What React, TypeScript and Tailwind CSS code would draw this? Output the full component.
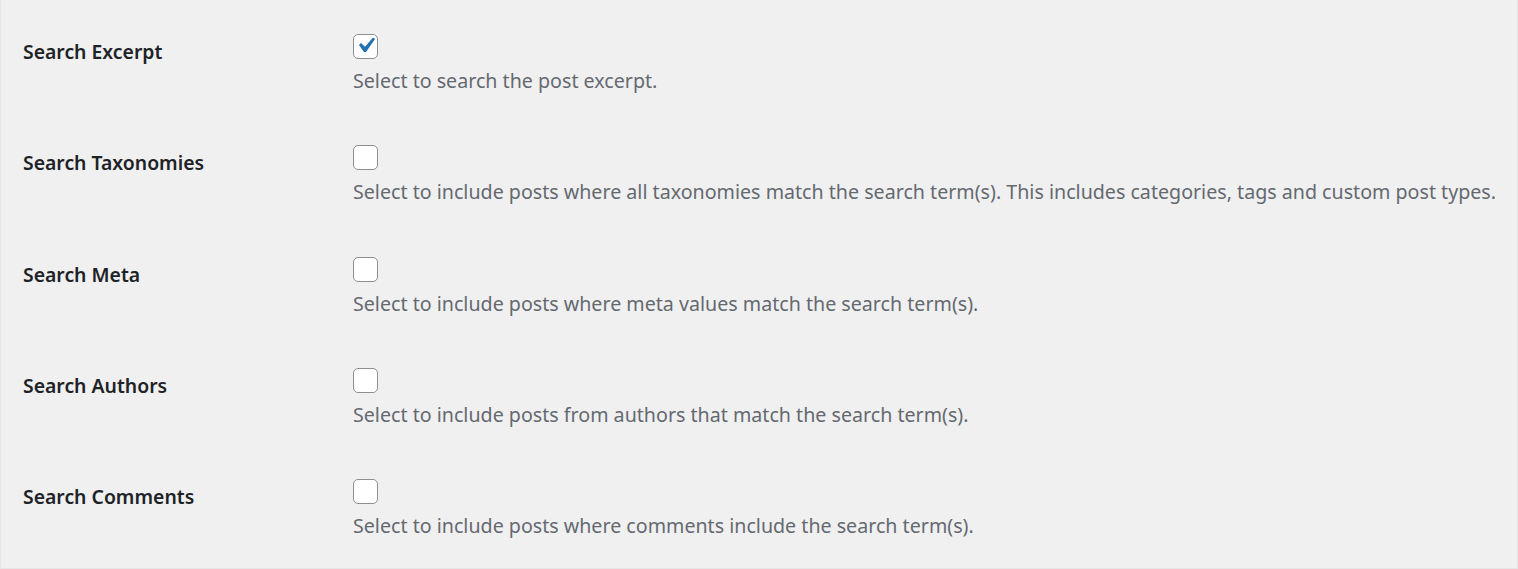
import { useState } from 'react'

type Opcao = {
  id: string
  label: string
  descricao: string
  marcado: boolean
}

const opcoes: Opcao[] = [
  { id: 'excerpt', label: 'Search Excerpt', descricao: 'Select to search the post excerpt.', marcado: true },
  {
    id: 'taxonomies',
    label: 'Search Taxonomies',
    descricao:
      'Select to include posts where all taxonomies match the search term(s). This includes categories, tags and custom post types.',
    marcado: false,
  },
  { id: 'meta', label: 'Search Meta', descricao: 'Select to include posts where meta values match the search term(s).', marcado: false },
  { id: 'authors', label: 'Search Authors', descricao: 'Select to include posts from authors that match the search term(s).', marcado: false },
  { id: 'comments', label: 'Search Comments', descricao: 'Select to include posts where comments include the search term(s).', marcado: false },
]

function Checkbox({ marcado, onChange }: { marcado: boolean; onChange: () => void }) {
  return (
    <button
      type="button"
      onClick={onChange}
      className="w-[25px] h-[25px] rounded-[5px] border-[1.5px] border-[#8c8f94] bg-white flex items-center justify-center"
    >
      {marcado && (
        <svg className="w-[31px] h-[31px] shrink-0 -mt-[2px]" viewBox="0 0 20 20">
          <path d="M14.83 4.89l1.34.94-5.81 8.38H9.02L5.78 9.67l1.34-1.25 2.57 2.4z" fill="#2271b1" />
        </svg>
      )}
    </button>
  )
}

export default function App() {
  const [estado, setEstado] = useState(() => opcoes.map((o) => o.marcado))

  return (
    <div className="min-h-[569px] bg-[#f0f0f1] border-x border-b border-[#e6e6e6] font-['Noto_Sans',sans-serif]">
      {opcoes.map((o, i) => (
        <div key={o.id} className="flex h-[111.3px]">
          <div className="w-[352px] shrink-0 pl-[22px] pt-[38px] text-[19.4px] leading-[28px] font-semibold text-[#1d2327]">
            {o.label}
          </div>
          <div className="pt-[34px]">
            <Checkbox
              marcado={estado[i]}
              onChange={() => setEstado((s) => s.map((v, j) => (j === i ? !v : v)))}
            />
            <p className="mt-[8px] text-[19.65px] leading-[28px] text-[#646970] whitespace-nowrap">{o.descricao}</p>
          </div>
        </div>
      ))}
    </div>
  )
}
